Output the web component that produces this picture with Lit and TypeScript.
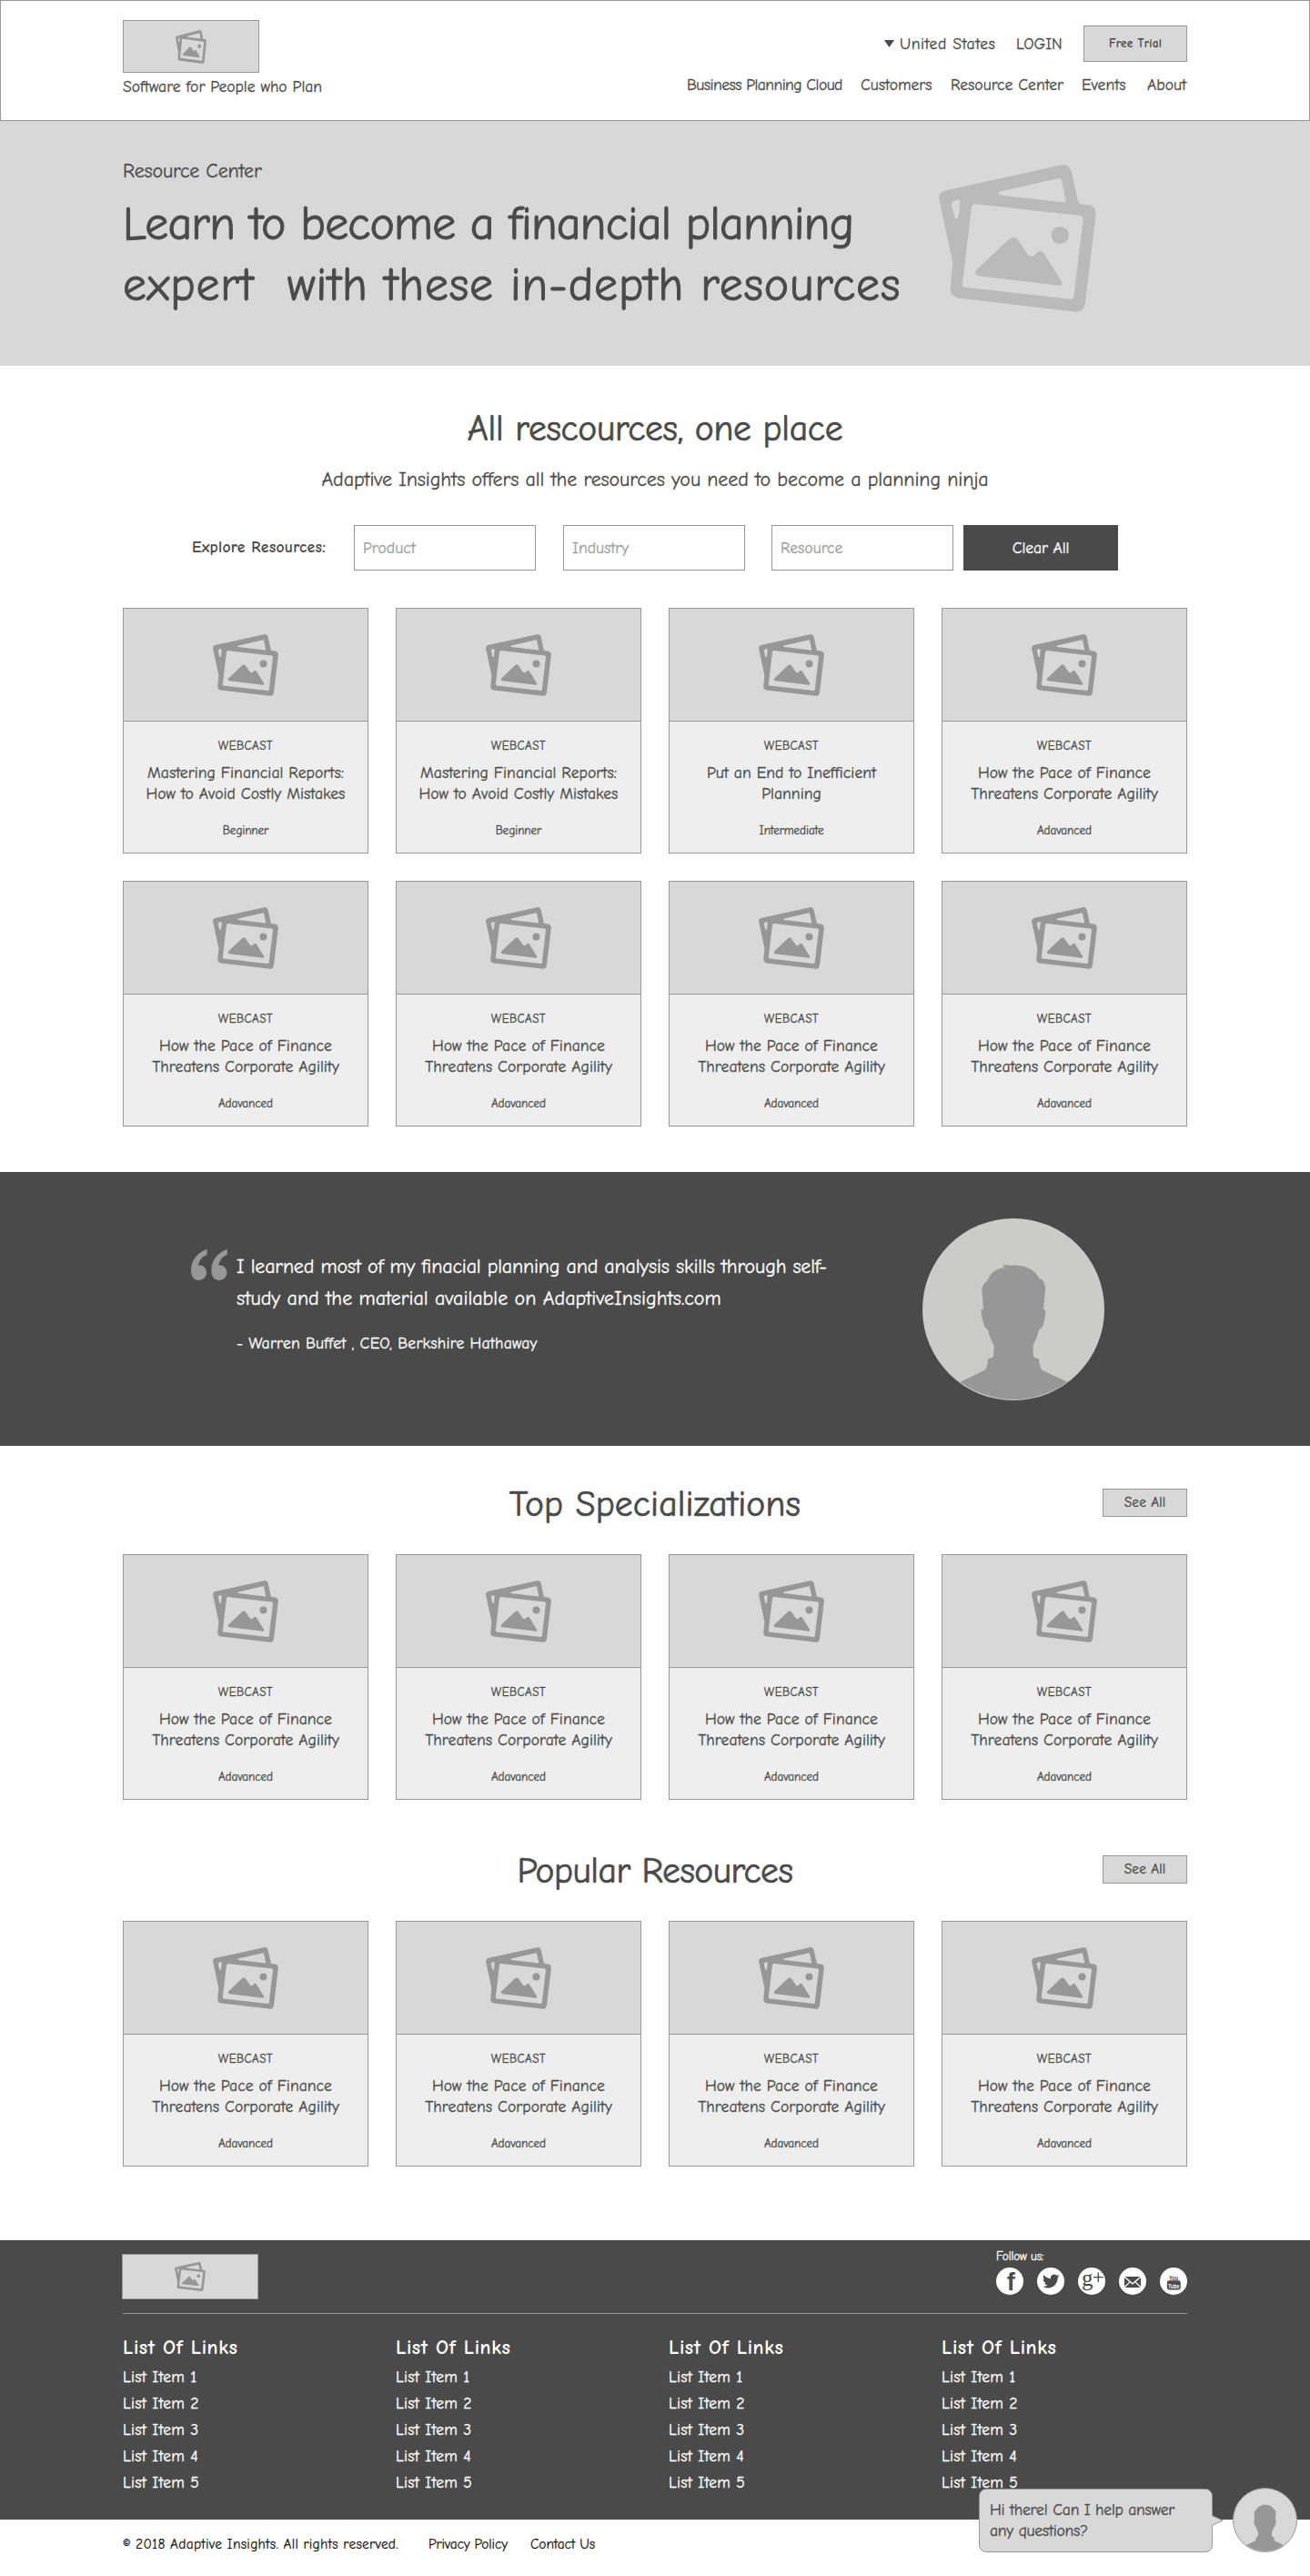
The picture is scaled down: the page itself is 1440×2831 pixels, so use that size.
import { LitElement, html, css, svg } from "lit";
import { customElement, property } from "lit/decorators.js";

type Card = { kind: string; title: string; level: string };

const AGILITY: Card = {
  kind: "WEBCAST",
  title: "How the Pace of Finance Threatens Corporate Agility",
  level: "Adavanced",
};
const REPORTS: Card = {
  kind: "WEBCAST",
  title: "Mastering Financial Reports: How to Avoid Costly Mistakes",
  level: "Beginner",
};
const PLANNING: Card = {
  kind: "WEBCAST",
  title: "Put an End to Inefficient Planning",
  level: "Intermediate",
};

const RESOURCES: Card[] = [REPORTS, REPORTS, PLANNING, AGILITY, AGILITY, AGILITY, AGILITY, AGILITY];
const ROW_OF_FOUR: Card[] = [AGILITY, AGILITY, AGILITY, AGILITY];
const LINKS = [1, 2, 3, 4, 5];
const COLUMNS = [1, 2, 3, 4];

/* Two overlapping photo frames, the placeholder for every image. */
@customElement("photo-icon")
class PhotoIcon extends LitElement {
  static styles = css`
    :host { display: block; color: #979797; }
    .art { display: block; width: 100%; height: 100%; fill: currentColor; stroke: none; }
  `;
  render() {
    return html`<svg class="art" viewBox="66 62 520 488" preserveAspectRatio="none">
      <path fill-rule="evenodd" d="M66 172Q67 152 90 147L472 63Q496 60 504 84L526 184Q529 192 538 193L560 195Q585 199 585 225L549 524Q544 549 520 549L128 503Q104 498 104 475L112 385Z
        M268 151Q258 157 268 163L480 187Q487 187 486 182L472 115Q470 106 458 108Z
        M118 181Q108 184 108 194L118 235Q119 241 124 241Q129 241 131 234L136 184Q136 177 128 178Z
        M188 192Q176 191 174 203L144 457Q143 466 152 468L500 507Q510 508 512 498L543 242Q543 233 534 231Z"/>
      <path d="M188 412L298 308Q313 297 326 309L358 357Q369 371 382 361L392 352Q404 343 412 354L472 449Q476 461 464 462L196 430Q183 426 188 412Z"/>
      <circle cx="466.500" cy="295.500" r="29"/>
    </svg>`;
  }
}

/* Silhouette of a person inside a disc. */
@customElement("person-avatar")
class PersonAvatar extends LitElement {
  static styles = css`
    :host { display: block; }
    .art { display: block; width: 100%; height: 100%; }
    .person { fill: #979797; }
  `;
  render() {
    return html`<svg class="art" viewBox="102 87 600 600">
      <path class="person" d="M226 626L308 587Q318 575 318 550Q330 549 336 542L338 506Q326 487 317 452Q311 452 306 440Q295 410 296 388L303 386L298 320Q302 300 318 290Q330 252 380 250L362 247L372 245L368 236Q376 242 390 242Q460 236 487 284Q507 290 507 322L501 386L508 390Q507 420 497 445Q493 452 487 453Q480 483 466 506L468 542Q474 548 486 550Q487 575 496 587L580 626A298 298 0 0 1 226 626Z"/>
    </svg>`;
  }
}

@customElement("resource-card")
class ResourceCard extends LitElement {
  @property({ attribute: false }) card!: Card;

  static styles = css`
    :host { display: block; }
    .card {
      box-sizing: border-box; height: 270px; border: 1px solid #979797;
      background: #eeeeee; text-align: center; color: #4a4a4a;
    }
    .media {
      display: flex; align-items: center; justify-content: center;
      box-sizing: border-box; height: 124px; background: #d8d8d8; border-bottom: 1px solid #979797;
    }
    .icon { width: 72px; height: 68px; }
    .body { display: flex; flex-direction: column; align-items: center; padding-top: 18px; }
    .kind { font-size: 13.2px; line-height: 18px; letter-spacing: 0.4px; }
    .title { width: 240px; height: 46px; margin-top: 9px; font-size: 17.6px; line-height: 23px; letter-spacing: 0.05px; }
    .level { margin-top: 20px; font-size: 13.2px; line-height: 18px; letter-spacing: -0.1px; }
  `;
  render() {
    return html`<article class="card">
      <div class="media"><photo-icon class="icon"></photo-icon></div>
      <div class="body">
        <div class="kind">${this.card.kind}</div>
        <div class="title">${this.card.title}</div>
        <div class="level">${this.card.level}</div>
      </div>
    </article>`;
  }
}

const facebook = svg`<text class="glyph f" x="16.300" y="25.200" text-anchor="middle">f</text>`;
const twitter = svg`<path class="glyph" transform="translate(6 5.800) scale(.77)" d="M23.950 4.570a10 10 0 0 1-2.820.770 4.960 4.960 0 0 0 2.160-2.720c-.950.550-2 .960-3.130 1.180a4.920 4.920 0 0 0-8.380 4.480C7.690 8.100 4.070 6.130 1.640 3.160a4.820 4.820 0 0 0-.670 2.480c0 1.710.870 3.210 2.190 4.100a4.900 4.900 0 0 1-2.230-.620v.060a4.920 4.920 0 0 0 3.950 4.830 5 5 0 0 1-2.210.080 4.940 4.940 0 0 0 4.600 3.420A9.870 9.870 0 0 1 0 19.540a13.990 13.990 0 0 0 7.550 2.210c9.050 0 14-7.500 14-13.980 0-.210 0-.420-.020-.630a9.940 9.940 0 0 0 2.460-2.550z"/>`;
const google = svg`<text class="glyph g" x="4" y="20.200">g</text><path class="plus" d="M22.300 5.500v10.500M17 10.700h10.800"/>`;
const mail = svg`<path class="glyph" d="M6 10h18v12H6z"/><path class="fold" d="M6 10.200l9 7.600 9-7.600M6 21.800l6.200-6.200M24 21.800l-6.200-6.200"/>`;
const youtube = svg`<text class="glyph you" x="10" y="13.600" textLength="10" lengthAdjust="spacingAndGlyphs">You</text>
  <rect class="glyph" x="7.800" y="14.300" width="15" height="10.200" rx="2.400"/>
  <text class="tube" x="9" y="22.600" textLength="12.500" lengthAdjust="spacingAndGlyphs">Tube</text>`;

@customElement("app-root")
export class AppRoot extends LitElement {
  static styles = css`
    :host {
      display: block; position: relative; width: 1440px; background: #fff; color: #4a4a4a;
      font-family: "Comic Neue", "Open Sans", sans-serif; font-size: 17.6px; line-height: 22px;
      -webkit-text-stroke: 0.3px currentColor;
    }
    *, *::before, *::after { box-sizing: border-box; }

    .header {
      display: flex; justify-content: space-between; height: 133px; padding: 21px 134px 0;
      border: 1px solid #979797;
    }
    .logo { display: flex; align-items: center; justify-content: center; width: 150px; background: #d8d8d8; border: 1px solid #979797; }
    .logo.top { height: 58px; }
    .logo.bottom { height: 50px; }
    .logo-icon { width: 34px; height: 37px; }
    .logo.bottom .logo-icon { height: 32px; }
    .tagline { margin-top: 4px; }
    .menus { display: flex; flex-direction: column; align-items: flex-end; padding-top: 6px; }
    .account { display: flex; align-items: center; height: 40px; }
    .caret { width: 11px; height: 8px; background: #4a4a4a; clip-path: polygon(0 0, 100% 0, 50% 100%); margin-right: 6px; }
    .country { width: 128px; letter-spacing: 0.54px; }
    .login { width: 74px; letter-spacing: 0; }
    .trial {
      display: flex; align-items: center; justify-content: center; width: 114px; height: 40px;
      background: #d8d8d8; border: 1px solid #979797; font-size: 13.2px; font-weight: 700; letter-spacing: 0.27px;
      -webkit-text-stroke-width: 0;
    }
    .nav { display: grid; grid-template-columns: 191px 99px 144px 72px 44px; margin-top: 14px; white-space: nowrap; }
    .nav-item.tight { letter-spacing: -0.56px; }

    .hero { display: flex; align-items: flex-start; height: 269px; padding: 41px 135px 0; background: #d8d8d8; }
    .hero-copy { width: 897px; }
    .eyebrow { font-size: 22px; line-height: 28px; letter-spacing: -0.17px; }
    .headline { margin: 11px 0 0; font-size: 51.8px; line-height: 67px; font-weight: 400; -webkit-text-stroke-width: 0.9px; }
    .headline-line { display: block; white-space: pre; letter-spacing: -0.78px; }
    .headline-line.loose { letter-spacing: 0.86px; }
    .hero-icon { width: 173px; height: 162px; margin-top: 7px; color: #bababa; }

    .heading { margin: 0; height: 50px; font-size: 39.6px; line-height: 50px; font-weight: 400; text-align: center; letter-spacing: -0.28px; -webkit-text-stroke-width: 0.7px; }
    .intro { padding: 44px 135px 50px; }
    .lead { margin: 17px 0 0; font-size: 22px; line-height: 28px; text-align: center; letter-spacing: -0.1px; }
    .filters { display: flex; align-items: center; margin: 36px 0 41px; padding-left: 76px; }
    .filters-label { width: 178px; padding-bottom: 3px; font-weight: 700; letter-spacing: 0.28px; -webkit-text-stroke-width: 0; }
    .field {
      display: flex; align-items: center; width: 200px; height: 50px; padding: 0 0 1px 9px; margin-right: 30px;
      border: 1px solid #979797; color: #a0a0a0;
    }
    .field.second { margin-right: 29px; }
    .field.last { margin-right: 11px; }
    .clear { display: flex; align-items: center; justify-content: center; width: 170px; height: 50px; padding-bottom: 1px; background: #4a4a4a; color: #fff; letter-spacing: -0.1px; }
    .cards { display: grid; grid-template-columns: repeat(4, 270px); gap: 30px; }

    .quote { display: flex; align-items: flex-start; height: 301px; padding: 51px 0 0 210px; background: #4a4a4a; color: #fff; }
    .mark { width: 40px; height: 34px; margin: 34px 10px 0 0; fill: #979797; }
    .quote-copy { width: 754px; padding-top: 36px; }
    .quote-text { margin: 0; font-size: 22px; line-height: 35px; }
    .quote-line { display: block; white-space: nowrap; letter-spacing: -0.17px; }
    .quote-line.loose { letter-spacing: 0; }
    .author { margin-top: 20px; letter-spacing: 0.2px; }
    .portrait { width: 200px; height: 200px; border-radius: 50%; background: #cbcbc7; }

    .section { padding: 37px 135px 0; }
    .section + .section { padding-top: 51px; }
    .section-head { display: grid; grid-template-columns: 1fr auto 1fr; align-items: center; height: 50px; margin-bottom: 32px; }
    .section-head .heading { padding-top: 2px; height: 52px; margin-bottom: -2px; }
    .heading.loose { letter-spacing: 0.16px; }
    .heading.tight { letter-spacing: -0.48px; }
    .see-all {
      display: flex; align-items: center; justify-content: center; justify-self: end; width: 93px; height: 31px;
      background: #d8d8d8; border: 1px solid #979797; font-size: 15.4px; letter-spacing: 0.12px;
    }

    .footer { height: 307px; margin-top: 81px; padding: 0 135px; background: #4a4a4a; color: #fff; }
    .footer-top { display: flex; justify-content: space-between; height: 81px; border-bottom: 1px solid #979797; }
    .logo.bottom { margin: 15px 0 0 -1px; }
    .follow { padding-top: 9px; font-size: 13.2px; line-height: 18px; letter-spacing: -0.1px; }
    .socials { display: flex; gap: 15px; margin-top: 3px; }
    .social { display: block; width: 30px; height: 30px; background: #fff; border-radius: 50%; -webkit-text-stroke: 0; letter-spacing: 0; }
    .glyph { fill: #4a4a4a; }
    .f { font: 700 27px "Liberation Sans", sans-serif; }
    .g { font: 25px "Liberation Serif", serif; }
    .you { font: 700 7.5px "Liberation Sans", sans-serif; }
    .tube { font: 700 7.5px "Liberation Sans", sans-serif; fill: #fff; }
    .plus { stroke: #4a4a4a; stroke-width: 1.3; }
    .fold { fill: none; stroke: #fff; stroke-width: 1.3; }
    .link-columns { display: grid; grid-template-columns: repeat(4, 270px); column-gap: 30px; padding-top: 23px; }
    .links-title { font-size: 22px; line-height: 28px; font-weight: 700; letter-spacing: 0.6px; margin-bottom: 4px; -webkit-text-stroke-width: 0; }
    .link { line-height: 29px; letter-spacing: 0.25px; }

    .legal { display: flex; height: 62px; padding: 17px 135px 0; color: #111; font-size: 15.4px; line-height: 20px; -webkit-text-stroke-width: 0.2px; }
    .copyright { width: 336px; letter-spacing: 0.28px; }
    .privacy { width: 112px; letter-spacing: -0.15px; }
    .contact { letter-spacing: -0.1px; }

    .chat { position: absolute; right: 14px; bottom: 26px; display: flex; align-items: center; gap: 22px; }
    .bubble {
      position: relative; width: 257px; height: 70px; padding: 11px; border: 1px solid #979797; border-radius: 8px;
      background: #d8d8d8; line-height: 23px; letter-spacing: -0.23px;
    }
    .tail { position: absolute; left: 255px; top: 28px; width: 13px; height: 12px; fill: #d8d8d8; stroke: #979797; }
    .agent { width: 71px; height: 71px; border: 1px solid #979797; border-radius: 50%; background: #d8d8d8; }
  `;

  private cards(list: Card[]) {
    return html`<div class="cards">${list.map((c) => html`<resource-card .card=${c}></resource-card>`)}</div>`;
  }

  private section(title: string, spacing: "loose" | "tight") {
    return html`<section class="section">
      <div class="section-head">
        <span></span>
        <h2 class="heading ${spacing}">${title}</h2>
        <div class="see-all">See All</div>
      </div>
      ${this.cards(ROW_OF_FOUR)}
    </section>`;
  }

  render() {
    return html`
      <header class="header">
        <div class="brand">
          <div class="logo top"><photo-icon class="logo-icon"></photo-icon></div>
          <div class="tagline">Software for People who Plan</div>
        </div>
        <div class="menus">
          <div class="account">
            <span class="caret"></span>
            <span class="country">United States</span>
            <span class="login">LOGIN</span>
            <span class="trial">Free Trial</span>
          </div>
          <nav class="nav">
            <span class="nav-item tight">Business Planning Cloud</span>
            <span class="nav-item">Customers</span>
            <span class="nav-item">Resource Center</span>
            <span class="nav-item">Events</span>
            <span class="nav-item">About</span>
          </nav>
        </div>
      </header>

      <section class="hero">
        <div class="hero-copy">
          <div class="eyebrow">Resource Center</div>
          <h1 class="headline">
            <span class="headline-line">Learn to become a financial planning</span>
            <span class="headline-line loose">expert  with these in-depth resources</span>
          </h1>
        </div>
        <photo-icon class="hero-icon"></photo-icon>
      </section>

      <section class="intro">
        <h2 class="heading">All rescources, one place</h2>
        <p class="lead">Adaptive Insights offers all the resources you need to become a planning ninja</p>
        <div class="filters">
          <span class="filters-label">Explore Resources:</span>
          <span class="field">Product</span>
          <span class="field second">Industry</span>
          <span class="field last">Resource</span>
          <span class="clear">Clear All</span>
        </div>
        ${this.cards(RESOURCES)}
      </section>

      <section class="quote">
        <svg class="mark" viewBox="0 0 40 34">
          <path d="M17.500 0C8 3 0 11 0 23C0 30 3.500 34 8.500 34C13.500 34 17 30 17 25.500C17 21 13.500 17.500 9.500 17.500L8 17.500C9 12 12 8 17.500 6Z"/>
          <path d="M39.800 0C30.300 3 22.300 11 22.300 23C22.300 30 25.800 34 30.800 34C35.800 34 39.300 30 39.300 25.500C39.300 21 35.800 17.500 31.800 17.500L30.300 17.500C31.300 12 34.300 8 39.800 6Z"/>
        </svg>
        <div class="quote-copy">
          <p class="quote-text">
            <span class="quote-line">I learned most of my finacial planning and analysis skills through self-</span>
            <span class="quote-line loose">study and the material available on AdaptiveInsights.com</span>
          </p>
          <div class="author">- Warren Buffet , CEO, Berkshire Hathaway</div>
        </div>
        <person-avatar class="portrait"></person-avatar>
      </section>

      ${this.section("Top Specializations", "loose")}
      ${this.section("Popular Resources", "tight")}

      <footer class="footer">
        <div class="footer-top">
          <div class="logo bottom"><photo-icon class="logo-icon"></photo-icon></div>
          <div class="follow">
            Follow us:
            <div class="socials">
              ${[facebook, twitter, google, mail, youtube].map(
                (icon) => html`<svg class="social" viewBox="0 0 30 30">${icon}</svg>`
              )}
            </div>
          </div>
        </div>
        <div class="link-columns">
          ${COLUMNS.map(
            () => html`<div class="link-column">
              <div class="links-title">List Of Links</div>
              ${LINKS.map((n) => html`<div class="link">List Item ${n}</div>`)}
            </div>`
          )}
        </div>
      </footer>
      <div class="legal">
        <span class="copyright">© 2018 Adaptive Insights. All rights reserved.</span>
        <span class="privacy">Privacy Policy</span>
        <span class="contact">Contact Us</span>
      </div>

      <div class="chat">
        <div class="bubble">
          Hi there! Can I help answer any questions?
          <svg class="tail" viewBox="0 0 13 12"><path d="M0 .5L12 6L0 11.500"/></svg>
        </div>
        <person-avatar class="agent"></person-avatar>
      </div>
    `;
  }
}
